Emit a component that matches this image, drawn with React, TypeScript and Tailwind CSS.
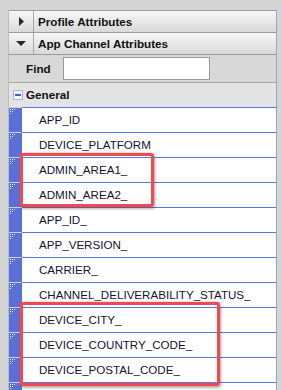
import React from "react";

const items = [
  "APP_ID",
  "DEVICE_PLATFORM",
  "ADMIN_AREA1_",
  "ADMIN_AREA2_",
  "APP_ID_",
  "APP_VERSION_",
  "CARRIER_",
  "CHANNEL_DELIVERABILITY_STATUS_",
  "DEVICE_CITY_",
  "DEVICE_COUNTRY_CODE_",
  "DEVICE_POSTAL_CODE_",
  "",
];

function Glyph() {
  return (
    <svg width="6" height="5" viewBox="0 0 6 5" className="block">
      <rect x="0" y="0" width="1" height="1" fill="#ffffff" />
      <rect x="2" y="0" width="1" height="1" fill="#e8ecff" />
      <rect x="4" y="0" width="1" height="1" fill="#e8ecff" />
      <rect x="0" y="2" width="1" height="1" fill="#ffffff" />
      <rect x="2" y="2" width="1" height="1" fill="#dfe4ff" />
      <rect x="0" y="4" width="1" height="1" fill="#ffffff" />
    </svg>
  );
}

function Header({ label, open }: { label: string; open: boolean }) {
  return (
    <div className="flex h-[22px] border-b border-[#9c9c9c] bg-gradient-to-b from-[#f7f7f7] to-[#d9d9d9]">
      <div className="flex w-[25px] items-center justify-center border-r border-[#a8a8a8]">
        {open ? (
          <svg width="10" height="5" viewBox="0 0 10 5">
            <polygon points="0,0 10,0 5,5" fill="#2a2a2a" />
          </svg>
        ) : (
          <svg width="5" height="9" viewBox="0 0 5 9">
            <polygon points="0,0 5,4.5 0,9" fill="#2a2a2a" />
          </svg>
        )}
      </div>
      <div className="flex flex-1 items-center pl-[4px] text-[11.7px] font-bold text-[#111]">
        {label}
      </div>
    </div>
  );
}

export default function App() {
  return (
    <div
      className="relative h-[390px] w-[282px] overflow-hidden bg-[#d5d5d5] pl-[8px] pr-[5px] pt-[10px]"
      style={{ fontFamily: '"Liberation Sans", Arial, sans-serif' }}
    >
      <div className="flex flex-col border-l border-[#bdbdbd] border-r border-r-[#8ea6cf]">
        <div className="border-t border-[#9c9c9c]">
          <Header label="Profile Attributes" open={false} />
        </div>
        <Header label="App Channel Attributes" open={true} />
        <div className="flex h-[28px] items-center border-b border-[#a8a8a8] bg-[#d8d8d8]">
          <span className="ml-[17px] w-[37px] text-[11.7px] font-bold text-[#111]">Find</span>
          <div className="h-[23px] w-[147px] border border-[#9a9a9a] bg-white" />
        </div>
        <div className="flex h-[24px] items-center bg-[#e4e4e4]">
          <div className="ml-[4px] flex h-[10px] w-[10px] items-center justify-center border border-[#a9b8d4] bg-[#f2f5fb]">
            <div className="h-[2px] w-[6px] bg-[#3d5fd6]" />
          </div>
          <span className="ml-[3px] text-[11.7px] font-bold text-[#111]">General</span>
        </div>
        {items.map((it, i) => (
          <div key={i} className="flex h-[25px] bg-white">
            <div className="w-[13px] border-t border-[#c9d1f2] bg-[#5a6fd8] pl-[1px] pt-[1px]">
              <Glyph />
            </div>
            <div className="flex flex-1 items-center border-t border-[#5b78dc] pl-[17px] text-[11.6px] text-[#121233]">
              {it}
            </div>
          </div>
        ))}
      </div>

      <div className="absolute left-[20px] top-[153px] h-[54px] w-[134px] rounded-[3px] border-[3px] border-[#ef4a50] shadow-[0_0_2px_rgba(255,90,90,0.7),1px_2px_3px_rgba(0,0,0,0.3)]" />
      <div className="absolute left-[20px] top-[302px] h-[84px] w-[200px] rounded-[3px] border-[3px] border-[#ef4a50] shadow-[0_0_2px_rgba(255,90,90,0.7),1px_2px_3px_rgba(0,0,0,0.3)]" />
    </div>
  );
}
